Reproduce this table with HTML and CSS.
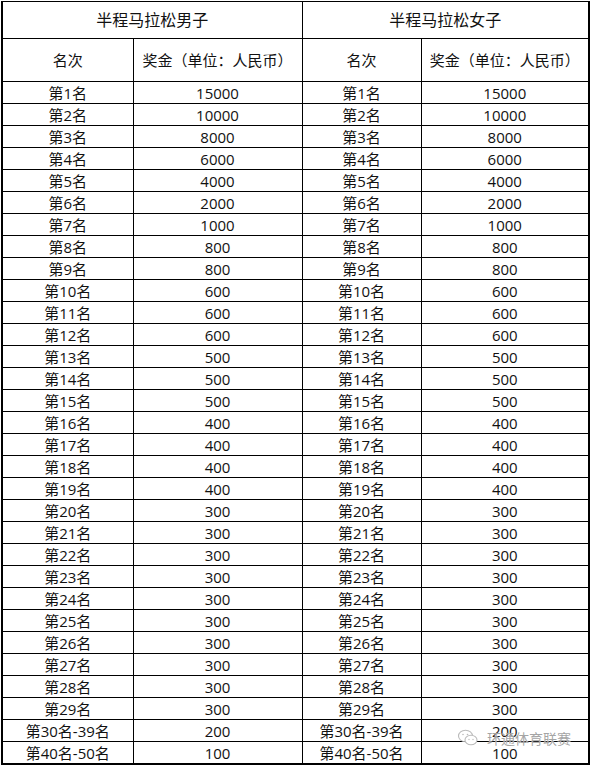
FILE: index.html
```html
<!DOCTYPE html>
<html>
<head>
<meta charset="utf-8">
<link rel="stylesheet" href="styles.css">
</head>
<body>
<div class="page">
<table class="prize">
<colgroup><col class="c1"><col class="c2"><col class="c3"><col class="c4"></colgroup>
<thead>
<tr class="h1"><th colspan="2">半程马拉松男子</th><th colspan="2">半程马拉松女子</th></tr>
<tr class="h2"><th>名次</th><th>奖金（单位：人民币）</th><th>名次</th><th>奖金（单位：人民币）</th></tr>
</thead>
<tbody>
<tr><td>第1名</td><td>15000</td><td>第1名</td><td>15000</td></tr>
<tr><td>第2名</td><td>10000</td><td>第2名</td><td>10000</td></tr>
<tr><td>第3名</td><td>8000</td><td>第3名</td><td>8000</td></tr>
<tr><td>第4名</td><td>6000</td><td>第4名</td><td>6000</td></tr>
<tr><td>第5名</td><td>4000</td><td>第5名</td><td>4000</td></tr>
<tr><td>第6名</td><td>2000</td><td>第6名</td><td>2000</td></tr>
<tr><td>第7名</td><td>1000</td><td>第7名</td><td>1000</td></tr>
<tr><td>第8名</td><td>800</td><td>第8名</td><td>800</td></tr>
<tr><td>第9名</td><td>800</td><td>第9名</td><td>800</td></tr>
<tr><td>第10名</td><td>600</td><td>第10名</td><td>600</td></tr>
<tr><td>第11名</td><td>600</td><td>第11名</td><td>600</td></tr>
<tr><td>第12名</td><td>600</td><td>第12名</td><td>600</td></tr>
<tr><td>第13名</td><td>500</td><td>第13名</td><td>500</td></tr>
<tr><td>第14名</td><td>500</td><td>第14名</td><td>500</td></tr>
<tr><td>第15名</td><td>500</td><td>第15名</td><td>500</td></tr>
<tr><td>第16名</td><td>400</td><td>第16名</td><td>400</td></tr>
<tr><td>第17名</td><td>400</td><td>第17名</td><td>400</td></tr>
<tr><td>第18名</td><td>400</td><td>第18名</td><td>400</td></tr>
<tr><td>第19名</td><td>400</td><td>第19名</td><td>400</td></tr>
<tr><td>第20名</td><td>300</td><td>第20名</td><td>300</td></tr>
<tr><td>第21名</td><td>300</td><td>第21名</td><td>300</td></tr>
<tr><td>第22名</td><td>300</td><td>第22名</td><td>300</td></tr>
<tr><td>第23名</td><td>300</td><td>第23名</td><td>300</td></tr>
<tr><td>第24名</td><td>300</td><td>第24名</td><td>300</td></tr>
<tr><td>第25名</td><td>300</td><td>第25名</td><td>300</td></tr>
<tr><td>第26名</td><td>300</td><td>第26名</td><td>300</td></tr>
<tr><td>第27名</td><td>300</td><td>第27名</td><td>300</td></tr>
<tr><td>第28名</td><td>300</td><td>第28名</td><td>300</td></tr>
<tr><td>第29名</td><td>300</td><td>第29名</td><td>300</td></tr>
<tr><td>第30名-39名</td><td>200</td><td>第30名-39名</td><td>200</td></tr>
<tr><td>第40名-50名</td><td>100</td><td>第40名-50名</td><td>100</td></tr>
</tbody>
</table>
<div class="watermark">
<svg class="wm-icon" width="22" height="20" viewBox="0 0 22 20">
<ellipse cx="8.5" cy="8" rx="7" ry="5.8" fill="none" stroke="#bbb" stroke-width="1.1"/>
<ellipse cx="14" cy="12" rx="6" ry="4.8" fill="#fff" stroke="#bbb" stroke-width="1.1"/>
<circle cx="6" cy="6.5" r="0.8" fill="#bbb"/><circle cx="10.5" cy="6.5" r="0.8" fill="#bbb"/>
<circle cx="12" cy="11.5" r="0.7" fill="#bbb"/><circle cx="16" cy="11.5" r="0.7" fill="#bbb"/>
</svg>
<span class="wm-text">环通体育联赛</span>
</div>
</div>
</body>
</html>
```
FILE: styles.css
```css
html, body { margin: 0; padding: 0; background: #fff; }
.page { position: relative; width: 590px; height: 765px; overflow: hidden; padding-top: 1px; box-sizing: border-box; }
.prize {
  border-collapse: collapse;
  table-layout: fixed;
  width: 589px;
  margin-left: 1px;
  font-family: "Open Sans", "Noto Sans CJK SC", sans-serif;
  font-size: 15px;
  color: #111;
}
.c1 { width: 131px; }
.c2 { width: 169px; }
.c3 { width: 119px; }
.c4 { width: 168px; }
.prize th, .prize td {
  border: 1px solid #000;
  text-align: center;
  padding: 0;
  font-weight: normal;
  white-space: nowrap;
  line-height: 20px;
}
.prize tr.h1 th { height: 36px; font-size: 16px; }
.prize tr.h2 th { height: 42px; }
.prize tbody td { height: 21px; }
.prize tr > :first-child { border-left: 2px solid #000; }
.prize tr > :last-child { border-right: 2px solid #000; }
.prize tbody tr:last-child td { border-bottom: 2px solid #000; }
.watermark {
  position: absolute;
  left: 457px;
  top: 728px;
  display: flex;
  align-items: center;
  gap: 8px;
}
.wm-text {
  font-family: "Noto Sans CJK SC", sans-serif;
  font-size: 14px;
  line-height: 20px;
  color: rgba(140,140,140,0.8);
  text-shadow: 0 0 1px #fff;
}
```
